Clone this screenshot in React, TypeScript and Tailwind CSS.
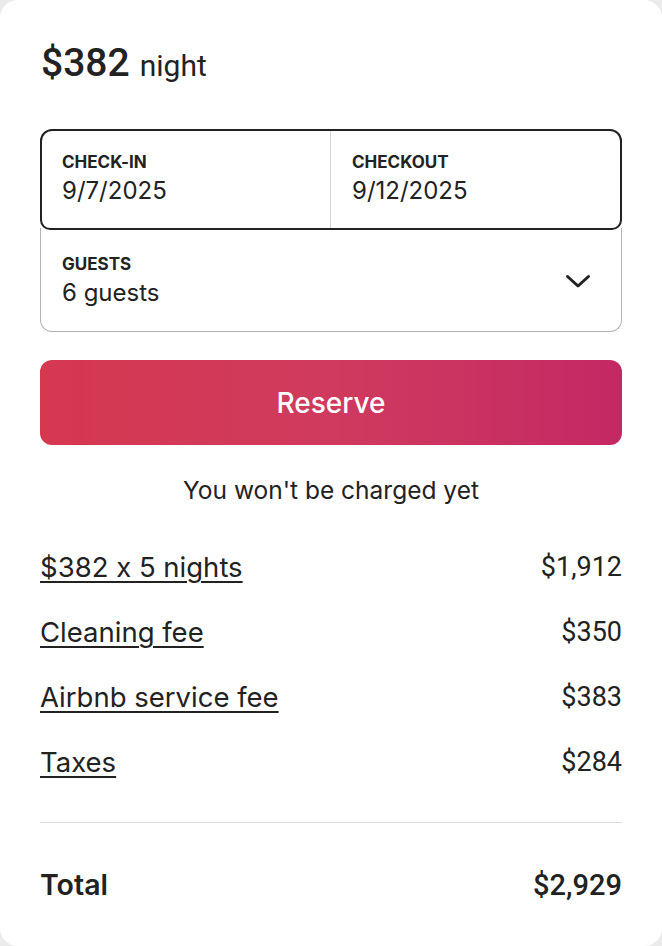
import React from "react";

const items = [
  { label: "$382 x 5 nights", value: "$1,912" },
  { label: "Cleaning fee", value: "$350" },
  { label: "Airbnb service fee", value: "$383" },
  { label: "Taxes", value: "$284" },
];

export default function App() {
  return (
    <div className="min-h-[946px] w-[662px] bg-[#ebebeb]">
      <div
        className="h-[946px] w-[662px] rounded-[18px] bg-white px-[40px] pt-[35px] text-[#222222] [font-feature-settings:'calt'_0]"
        style={{ fontFamily: "Inter, 'Noto Sans', sans-serif" }}
      >
        <div className="flex items-baseline gap-[10px] pl-[1px]" style={{ fontFamily: "Roboto, sans-serif" }}>
          <span className="text-[39px] font-medium leading-[56px]">$382</span>
          <span className="text-[30px] leading-[56px]">night</span>
        </div>

        <div className="mt-[35px]">
          <div className="relative z-10 grid h-[101px] grid-cols-2 rounded-t-[12px] rounded-b-[10px] border-2 border-[#222222] bg-white">
            <div className="flex flex-col justify-center border-r border-[#d4d4d4] pb-[3px] pl-[20px]">
              <div className="text-[17px] font-bold leading-[22px]">CHECK-IN</div>
              <div className="mt-[3px] text-[24px] leading-[30px]">9/7/2025</div>
            </div>
            <div className="flex flex-col justify-center pb-[3px] pl-[21px]">
              <div className="text-[17px] font-bold leading-[22px]">CHECKOUT</div>
              <div className="mt-[3px] text-[24px] leading-[30px]">9/12/2025</div>
            </div>
          </div>
          <div className="-mt-[2px] flex h-[104px] items-center justify-between rounded-b-[12px] border border-t-0 border-[#b0b0b0] pl-[21px] pr-[30px] pt-[2px]">
            <div className="flex flex-col">
              <div className="text-[17px] font-bold leading-[22px]">GUESTS</div>
              <div className="mt-[3px] text-[24px] leading-[30px]">6 guests</div>
            </div>
            <svg width="26" height="16" viewBox="0 0 26 16" fill="none">
              <path d="M2.5 3.5 L13 13 L23.5 3.5" stroke="#222222" strokeWidth="3" strokeLinecap="round" strokeLinejoin="round" />
            </svg>
          </div>
        </div>

        <button className="mt-[28px] flex h-[85px] w-full items-center justify-center rounded-[12px] bg-gradient-to-r from-[#d5384f] via-[#d03a5e] to-[#c42864] text-[28px] font-medium text-white">
          Reserve
        </button>

        <div className="mt-[27px] text-center text-[24.5px] leading-[36px]">You won't be charged yet</div>

        <div className="mt-[40px] flex flex-col gap-[27px]">
          {items.map((it) => (
            <div key={it.label} className="flex items-center justify-between text-[27.5px] leading-[38px]">
              <span className="underline decoration-[1.5px] underline-offset-[4px]">{it.label}</span>
              <span className="text-[27px]" style={{ fontFamily: "Roboto, sans-serif" }}>{it.value}</span>
            </div>
          ))}
        </div>

        <div className="mt-[41px] h-px bg-[#dddddd]" />

        <div className="mt-[43px] flex items-center justify-between text-[28.5px] font-semibold leading-[38px]">
          <span>Total</span>
          <span style={{ fontFamily: "Roboto, sans-serif" }} className="text-[29px] font-medium">$2,929</span>
        </div>
      </div>
    </div>
  );
}
